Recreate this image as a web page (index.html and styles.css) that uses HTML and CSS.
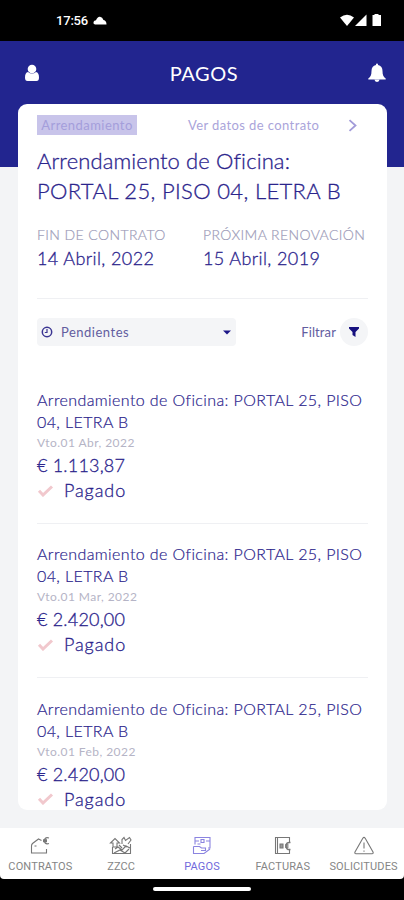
FILE: index.html
```html
<!DOCTYPE html>
<html lang="es">
<head>
    <meta charset="UTF-8">
    <meta name="viewport" content="width=device-width, initial-scale=1.0">
    <title>Pagos</title>
    <link rel="stylesheet" href="styles.css">
</head>
<body>
    <!-- Status bar -->
    <div class="status-bar">
        <span class="time">17:56</span>
        <svg class="cloud" width="14" height="9" viewBox="0 0 14 9"><path d="M2 8.500Q0 8 .5 6Q1 4.500 3 4.300Q4.500 .5 7 .8Q9.500 1 10.500 4Q13.500 4.500 13.500 8.500z" fill="#fff"/></svg>
        <svg class="signals" width="42" height="13" viewBox="0 0 42 13" fill="#fff">
            <path d="M0 3.500Q7-2 14 3.500L7 12z"/>
            <path d="M26.500 .5V12H15z"/>
            <path d="M34.500 1V0h4v1H41v11h-8.500V1z"/>
        </svg>
    </div>

    <!-- Header -->
    <header class="header">
        <svg width="16" height="20" viewBox="0 0 16 20" fill="#fff"><circle cx="8" cy="6" r="4.300"/><path d="M4 9Q8 12 12 9Q15 9.500 15 14.500Q15 18 12.500 18h-9Q1 18 1 14.500Q1 9.500 4 9z"/></svg>
        <h1>PAGOS</h1>
        <svg width="18" height="20" viewBox="0 0 18 20" fill="#fff"><path d="M8 1.500a1 1 0 0 1 2 0V2c3 .5 4.500 3 4.500 6 0 4 1 6 3.200 7.500v1H.3v-1C2.500 14 3.500 12 3.500 8c0-3 1.500-5.500 4.500-6z"/><path d="M6.500 16.500h5a2.500 2.500 0 0 1-5 0z"/></svg>
    </header>

    <main class="card">
        <div class="card-top">
            <span class="tag">Arrendamiento</span>
            <a class="link">Ver datos de contrato</a>
            <svg width="10" height="13" viewBox="0 0 10 13"><path d="M1.500 1.200L7.500 6.500L1.500 11.800" fill="none" stroke="#a29bd9" stroke-width="1.800"/></svg>
        </div>
        <h2><span class="title-top">Arrendamiento de Oficina:</span><br>PORTAL 25, PISO 04, LETRA B</h2>
        <div class="dates">
            <div><div class="label">FIN DE CONTRATO</div><div class="date">14 Abril, 2022</div></div>
            <div><div class="label">PRÓXIMA RENOVACIÓN</div><div class="date">15 Abril, 2019</div></div>
        </div>

        <!-- Filters -->
        <div class="filters">
            <div class="select">
                <svg width="12" height="12" viewBox="0 0 12 12" fill="none" stroke="#3b3592"><circle cx="6" cy="6" r="4.700" stroke-width="1.500"/><path d="M6 3v3.500H3.800" stroke-width="1.200"/></svg>
                <span>Pendientes</span>
                <svg class="caret" width="8" height="5" viewBox="0 0 8 5"><path d="M0 .5h8L4 4.500z" fill="#1c1688"/></svg>
            </div>
            <span class="filter-text">Filtrar</span>
            <div class="filter-button"><svg width="10" height="10" viewBox="0 0 10 10"><path d="M0 0h10v1.500L6.500 5v5L3.500 8V5L0 1.500z" fill="#16107f"/></svg></div>
        </div>

        <!-- Payments -->
        <div class="payment">
            <div class="name">Arrendamiento de Oficina: PORTAL 25, PISO<br>04, LETRA B</div>
            <div class="due">Vto.01 Abr, 2022</div>
            <div class="amount">€ 1.113,87</div>
            <div class="state"><svg width="17" height="12" viewBox="0 0 17 12"><path d="M2 5.800L6 10L15 1.500" fill="none" stroke="#f1c8cd" stroke-width="3"/></svg>Pagado</div>
        </div>
        <div class="payment">
            <div class="name">Arrendamiento de Oficina: PORTAL 25, PISO<br>04, LETRA B</div>
            <div class="due">Vto.01 Mar, 2022</div>
            <div class="amount">€ 2.420,00</div>
            <div class="state"><svg width="17" height="12" viewBox="0 0 17 12"><path d="M2 5.800L6 10L15 1.500" fill="none" stroke="#f1c8cd" stroke-width="3"/></svg>Pagado</div>
        </div>
        <div class="payment">
            <div class="name">Arrendamiento de Oficina: PORTAL 25, PISO<br>04, LETRA B</div>
            <div class="due">Vto.01 Feb, 2022</div>
            <div class="amount">€ 2.420,00</div>
            <div class="state"><svg width="17" height="12" viewBox="0 0 17 12"><path d="M2 5.800L6 10L15 1.500" fill="none" stroke="#f1c8cd" stroke-width="3"/></svg>Pagado</div>
        </div>
    </main>

    <!-- Tabs -->
    <div class="bottom">
        <nav class="tabs">
            <div class="tab">
                <svg width="22" height="20" viewBox="0 0 22 20"><path d="M12.500 4.500L9.500 3L3.500 7.500Q2.500 8.500 2.500 10v7h15v-4M5.500 10h2"/><path d="M20 2c-3.500-1-4.500 .8-4.500 2.700s1 3.800 4.500 2.800M14 4h4M14 5.500h4" stroke-width="1.300"/></svg>
                <span>CONTRATOS</span>
            </div>
            <div class="tab">
                <svg width="24" height="20" viewBox="0 0 24 20"><path d="M1.500 7L6 2.500L10.500 7H8v4H4V7zM13 8V3.500l2-2 1.500 3 4-3 1.500 2.500-3 4M3.500 11v6.500h18V8M6 13l3-2 4 3 4-4 4 2M5 17l6-3 5 3 4-4M14 9l4 2M10 9l3 3"/></svg>
                <span>ZZCC</span>
            </div>
            <div class="tab active">
                <svg width="20" height="20" viewBox="0 0 20 20"><path d="M3 8.500V1.500h15V12h-2M3 5h4M14 5h4M9 3.500h3v3H9zM5.500 8h3M1.500 10.500h6l2 1.500h4v2.500H9M1.500 10.500v7H12l6-4.500"/></svg>
                <span>PAGOS</span>
            </div>
            <div class="tab">
                <svg width="20" height="20" viewBox="0 0 20 20"><path d="M16.500 6V1.500H2.500v16h14V14M4.500 2v15"/><path d="M7 8h3v4H7z" fill="#999"/><path d="M17.500 6.500c-3-.5-4.500 1-4.500 3.500s1.500 4 4.500 3.500M12 9h3.500M12 11h3.500" stroke-width="1.500"/></svg>
                <span>FACTURAS</span>
            </div>
            <div class="tab">
                <svg width="22" height="20" viewBox="0 0 22 20"><path d="M9.800 2.200Q11 .5 12.200 2.200L20 16q.7 1.800-1 1.800H3Q1.300 17.800 2 16zM11 6.500v6M11 14.500v1.300"/></svg>
                <span>SOLICITUDES</span>
            </div>
        </nav>
        <div class="home-bar"></div>
    </div>
</body>
</html>
```
FILE: styles.css
```css
* { margin: 0; padding: 0; box-sizing: border-box; }
body { width: 404px; height: 900px; overflow: hidden; display: flex; flex-direction: column; background-color: #f3f4f6; font-family: Lato, "Open Sans", sans-serif; color: #2b248c; }
svg { display: block; flex: none; }

.status-bar { height: 41px; flex: none; background-color: #000; color: #fff; display: flex; align-items: center; padding: 0 22px 0 56px; }
.time { font-family: Roboto, sans-serif; font-size: 13px; font-weight: 500; letter-spacing: -0.2px; }
.cloud { margin-left: 5px; }
.signals { margin-left: auto; }

.header { height: 126px; flex: none; background-color: #22258f; display: flex; justify-content: space-between; padding: 22px 18px 0 24px; }
.header h1 { color: #fff; font-size: 20px; font-weight: 400; line-height: 20px; letter-spacing: 0.6px; }

.card { height: 706px; flex: none; margin: -63px 17px 18px 18px; padding: 11px 19px 0; background-color: #fff; border-radius: 9px; overflow: hidden; }
.card-top { display: flex; align-items: center; height: 20px; font-size: 13px; }
.tag { width: 100px; height: 20px; line-height: 20px; text-align: center; background-color: #c8c4ea; color: #a49edb; letter-spacing: 0.45px; }
.link { width: 132px; margin: 0 28px 0 51px; color: #aaa4da; letter-spacing: 0.4px; white-space: nowrap; }
h2 { margin-top: 11px; font-size: 22px; font-weight: 300; line-height: 30px; letter-spacing: 0.34px; white-space: nowrap; -webkit-text-stroke: 0.3px #2b248c; }
.title-top { letter-spacing: 0.12px; }

.dates { display: grid; grid-template-columns: 166px 1fr; height: 73px; margin-top: 20px; border-bottom: 1px solid #eff0f3; white-space: nowrap; }
.label { font-size: 14px; font-weight: 300; line-height: 18px; letter-spacing: 0.4px; color: #9c9bb8; -webkit-text-stroke: 0.2px #9c9bb8; }
.date { font-size: 18px; font-weight: 300; line-height: 28px; letter-spacing: 0.4px; -webkit-text-stroke: 0.3px #2b248c; }

.filters { height: 28px; margin-top: 19px; display: flex; align-items: center; font-size: 13px; letter-spacing: 0.5px; color: #625d9f; }
.select { width: 199px; height: 28px; display: flex; align-items: center; padding: 0 5px 0 4px; background-color: #f4f5f7; border-radius: 4px; }
.select span { margin-left: 8px; }
.caret { margin-left: auto; }
.filter-text { margin-left: auto; margin-right: 4px; letter-spacing: 0.1px; }
.filter-button { width: 28px; height: 28px; border-radius: 50%; background-color: #f4f5f7; display: flex; align-items: center; justify-content: center; }

.payment { height: 135px; border-bottom: 1px solid #eff0f3; margin-bottom: 19.3px; white-space: nowrap; font-weight: 300; }
.filters + .payment { margin-top: 43px; }
.name { font-size: 16px; line-height: 22px; letter-spacing: 0.4px; -webkit-text-stroke: 0.2px #2b248c; }
.due { font-size: 12px; font-weight: 400; line-height: 20px; color: #b5b4c6; letter-spacing: 0.45px; }
.amount { font-size: 18px; line-height: 24px; letter-spacing: 0.2px; -webkit-text-stroke: 0.3px #2b248c; }
.state { display: flex; align-items: center; gap: 10px; margin-top: 4px; font-size: 18px; line-height: 19px; letter-spacing: 0.9px; -webkit-text-stroke: 0.3px #2b248c; }

.bottom { height: 72px; flex: none; background-color: #000; }
.tabs { height: 51px; display: grid; grid-template-columns: repeat(5, 1fr); background-color: #fff; padding-top: 8px; border-radius: 0 0 4px 4px; }
.tab { display: flex; flex-direction: column; align-items: center; color: #858585; font-family: Roboto, sans-serif; font-size: 11px; line-height: 21px; letter-spacing: 0.15px; white-space: nowrap; }
.tab svg { fill: none; stroke: #777; stroke-width: 1.1; }
.tab.active { color: #7169dc; }
.active svg { stroke: #8b84e0; }

.home-bar { width: 98px; height: 4px; margin: 8px auto 0; border-radius: 2px; background-color: #fff; }
```
